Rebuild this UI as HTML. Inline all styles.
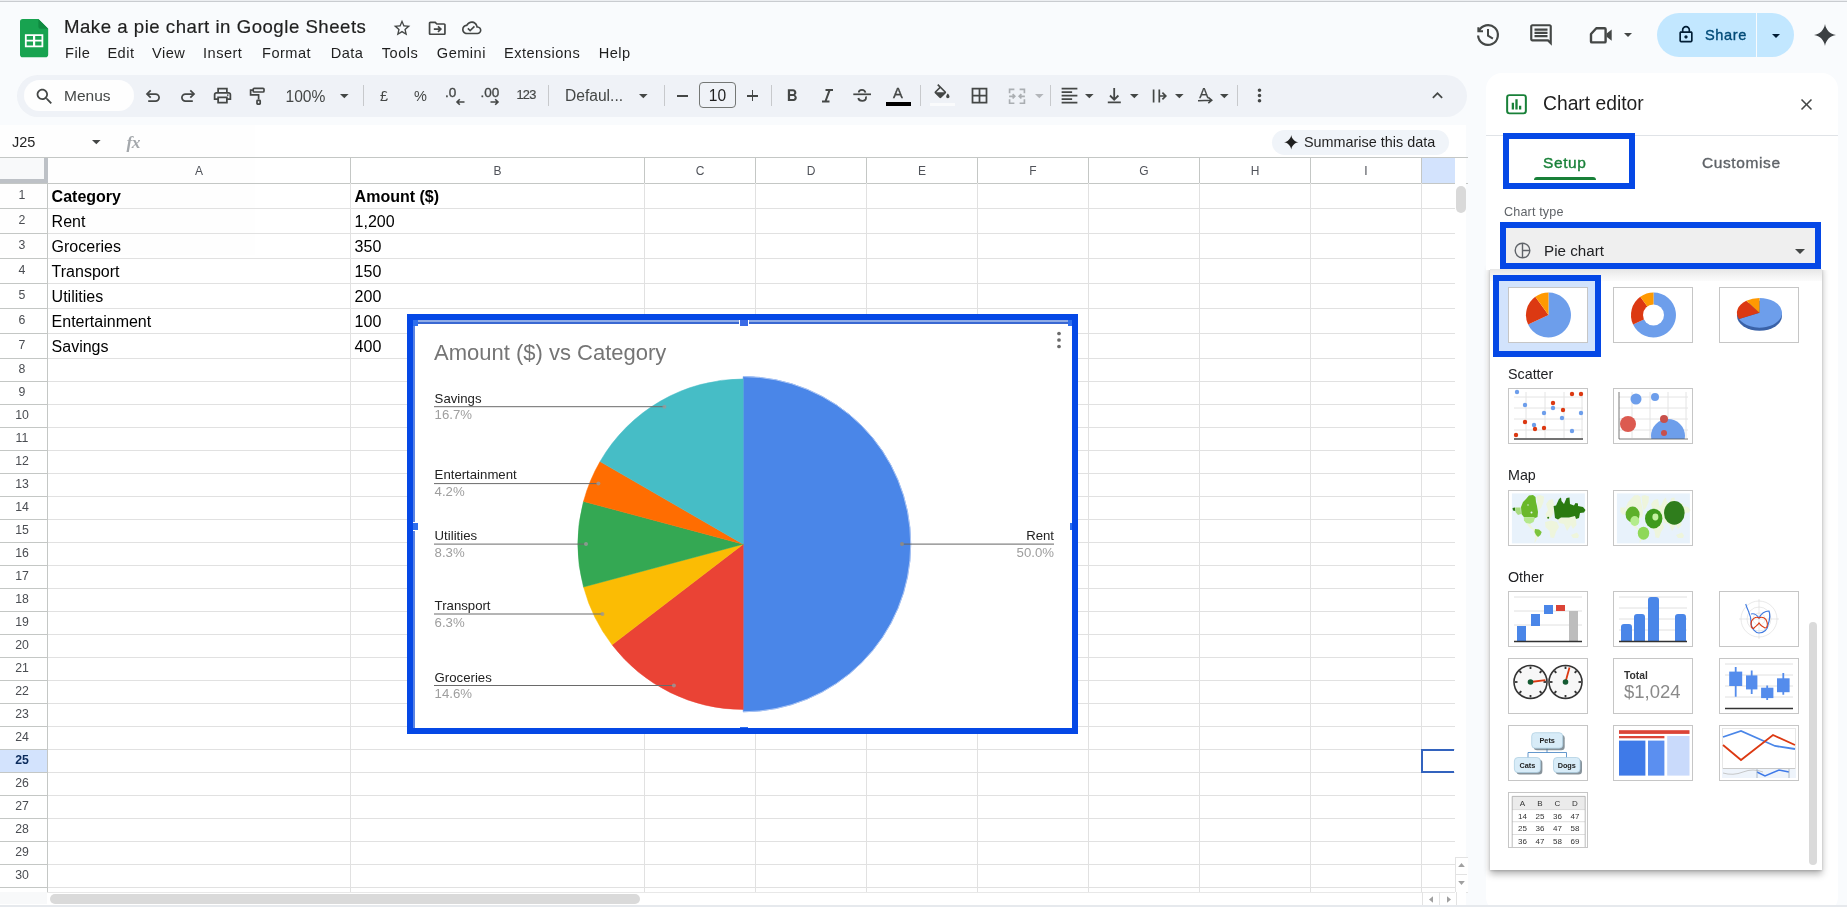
<!DOCTYPE html>
<html lang="en">
<head>
<meta charset="utf-8">
<title>Make a pie chart in Google Sheets</title>
<style>
html,body{margin:0;padding:0}
body{width:1847px;height:907px;overflow:hidden;position:relative;background:#f9fbfd;font-family:"Liberation Sans",sans-serif;color:#1f1f1f}
.a{position:absolute}
.t{position:absolute;white-space:nowrap;line-height:1}
.med{-webkit-text-stroke:0.35px currentColor}
svg{position:absolute;overflow:visible}
.menu{position:absolute;top:43.5px;font-size:14.6px;letter-spacing:.48px;line-height:18px;white-space:nowrap;color:#1f1f1f}
.sep{position:absolute;top:85px;width:1px;height:21px;background:#c7c9cc}
.ic{fill:#444746}
.hl{position:absolute;left:0;height:1px;background:#e1e1e1}
.vl{position:absolute;top:158px;width:1px;background:#e1e1e1}
.rn{position:absolute;left:0;width:44px;text-align:center;font-size:12.3px;line-height:14px;color:#4a4d52}
.cn{position:absolute;top:164px;text-align:center;font-size:12px;line-height:14px;color:#50535a}
.cell{position:absolute;font-size:16px;line-height:18px;color:#000;white-space:nowrap}
.thumb{position:absolute;width:78px;height:54px;border:1px solid #c6c6c6;background:#fff;overflow:hidden}
.thumb svg{left:0;top:0}
.lbl{position:absolute;left:1508px;font-size:14.3px;line-height:16px;color:#202124;white-space:nowrap}
</style>
</head>
<body>
<div id="root" style="position:absolute;left:0;top:0;width:1847px;height:907px;will-change:transform;opacity:.999">
<!-- top hairline -->
<div class="a" style="left:0;top:0;width:1847px;height:1px;background:#eceef1"></div><div class="a" style="left:0;top:1px;width:1847px;height:1px;background:#c9ccd0"></div>

<!-- ===== HEADER ===== -->
<svg style="left:20px;top:18.6px" width="28.2" height="38.3" viewBox="0 0 28.2 38.3">
  <path d="M2.800 0H18.400L28.200 9.800V35.500a2.800 2.800 0 0 1-2.800 2.800H2.800A2.800 2.800 0 0 1 0 35.500V2.800A2.800 2.800 0 0 1 2.800 0z" fill="#18a350"/>
  <path d="M18.400 0L28.200 9.800H21a2.600 2.600 0 0 1-2.600-2.600z" fill="#0f8a40"/>
  <path d="M4.900 15.200h18.400v13H4.900zM6.700 17v3.700h6.300V17zM15.200 17v3.700h6.300V17zM6.700 22.500v3.900h6.300v-3.900zM15.200 22.500v3.900h6.300v-3.900z" fill="#fff" fill-rule="evenodd"/>
</svg>
<div class="t" style="left:64px;top:15.5px;font-size:18.6px;letter-spacing:.52px;line-height:22px;color:#1f1f1f;-webkit-text-stroke:.2px #1f1f1f">Make a pie chart in Google Sheets</div>
<!-- star / move / cloud -->
<svg class="ic" style="left:391.6px;top:17.6px" width="20" height="20" viewBox="0 0 24 24"><path d="M22 9.24l-7.19-.62L12 2 9.19 8.63 2 9.24l5.46 4.73L5.82 21 12 17.27 18.18 21l-1.63-7.03L22 9.24zM12 15.4l-3.76 2.27 1-4.28-3.32-2.88 4.38-.38L12 6.1l1.71 4.04 4.38.38-3.32 2.88 1 4.28L12 15.4z"/></svg>
<svg class="ic" style="left:426.7px;top:18px" width="20.5" height="20.5" viewBox="0 0 24 24"><path d="M20 6h-8l-2-2H4c-1.1 0-2 .9-2 2v12c0 1.1.9 2 2 2h16c1.1 0 2-.9 2-2V8c0-1.1-.9-2-2-2zm0 12H4V6h5.17l2 2H20v10zm-7.84-2.59L13.59 17l4-4-4-4-1.42 1.41L13.75 12H8v2h5.75l-1.59 1.41z"/></svg>
<svg class="ic" style="left:462.4px;top:18.1px" width="19.5" height="19.5" viewBox="0 0 24 24"><path d="M19.35 10.04C18.67 6.59 15.64 4 12 4 9.11 4 6.6 5.64 5.35 8.04 2.34 8.36 0 10.91 0 14c0 3.31 2.69 6 6 6h13c2.76 0 5-2.24 5-5 0-2.64-2.05-4.78-4.65-4.96zM19 18H6c-2.21 0-4-1.79-4-4 0-2.05 1.53-3.76 3.56-3.97l1.07-.11.5-.95C8.08 7.14 9.94 6 12 6c2.62 0 4.88 1.86 5.39 4.43l.3 1.5 1.53.11c1.56.1 2.78 1.41 2.78 2.96 0 1.65-1.35 3-3 3zm-9-3.82l-2.09-2.09L6.5 13.5 10 17l6.01-6.01-1.41-1.41z"/></svg>
<!-- menus -->
<div class="menu" style="left:65px">File</div>
<div class="menu" style="left:107.400px">Edit</div>
<div class="menu" style="left:152px">View</div>
<div class="menu" style="left:203px">Insert</div>
<div class="menu" style="left:262px">Format</div>
<div class="menu" style="left:330.700px">Data</div>
<div class="menu" style="left:381.800px">Tools</div>
<div class="menu" style="left:436.800px">Gemini</div>
<div class="menu" style="left:504px">Extensions</div>
<div class="menu" style="left:598.700px">Help</div>

<!-- right header icons -->
<svg style="left:1475.6px;top:23.100px" width="24" height="24" viewBox="0 0 24 24" fill="none" stroke="#444746" stroke-width="2.200"><path d="M2.810 8.300A9.900 9.900 0 1 1 2.110 12.500"/><path d="M2.400 4.200V8.300H7" stroke-width="2.100"/><path d="M12 5.900V12.700L16.900 15.600" stroke-width="2"/></svg>
<svg class="ic" style="left:1528px;top:22px" width="26" height="26" viewBox="0 0 24 24"><path d="M21.990 4c0-1.100-.89-2-1.990-2H4c-1.100 0-2 .9-2 2v12c0 1.100.9 2 2 2h14l4 4-.010-18zM20 4v13.170L18.830 16H4V4h16zM6 12h12v2H6zm0-3h12v2H6zm0-3h12v2H6z"/></svg>
<svg style="left:1586px;top:22px" width="27" height="27" viewBox="0 0 27 27"><path d="M5 12L10.300 6.300H18.600a1 1 0 0 1 1 1V19.400a1 1 0 0 1-1 1H6a1 1 0 0 1-1-1Z" fill="none" stroke="#444746" stroke-width="2.400" stroke-linejoin="round"/><path d="M20.600 11.500L25.700 7.500V18.700L20.600 14.700Z" fill="#444746"/></svg>
<svg class="ic" style="left:1624px;top:33px" width="8" height="4" viewBox="0 0 10 5"><path d="M0 0l5 5 5-5z"/></svg>
<!-- share -->
<div class="a" style="left:1657px;top:13px;width:137px;height:44px;border-radius:22px;background:#c2e7ff"></div>
<div class="a" style="left:1756px;top:13px;width:1px;height:44px;background:#f9fbfd"></div>
<svg style="left:1676px;top:25.200px;fill:#001d35" width="20" height="19" viewBox="0 0 24 24" preserveAspectRatio="none"><path d="M18 8h-1V6c0-2.76-2.24-5-5-5S7 3.24 7 6v2H6c-1.1 0-2 .9-2 2v10c0 1.1.9 2 2 2h12c1.1 0 2-.9 2-2V10c0-1.1-.9-2-2-2zM9 6c0-1.66 1.34-3 3-3s3 1.34 3 3v2H9V6zm9 14H6V10h12v10zm-6-3c1.1 0 2-.9 2-2s-.9-2-2-2-2 .9-2 2 .9 2 2 2z"/></svg>
<div class="t med" style="left:1705px;top:26.400px;font-size:14.6px;letter-spacing:.6px;line-height:18px;color:#004a77">Share</div>
<svg style="left:1772.1px;top:33.700px;fill:#001d35" width="8" height="4" viewBox="0 0 10 5"><path d="M0 0l5 5 5-5z"/></svg>
<!-- gemini sparkle -->
<svg style="left:1814px;top:24px;fill:#3c4043" width="22" height="22" viewBox="0 0 24 24"><path d="M12 0C13 6.500 17.500 11 24 12C17.500 13 13 17.500 12 24C11 17.500 6.500 13 0 12C6.500 11 11 6.500 12 0z"/></svg>
<!-- ===== TOOLBAR ===== -->
<div class="a" style="left:17px;top:75px;width:1450px;height:42px;border-radius:21px;background:#eff2f7"></div>
<div class="a" style="left:24px;top:80px;width:110px;height:31px;border-radius:16px;background:#fff"></div>
<svg class="ic" style="left:33.6px;top:85.5px" width="21" height="21" viewBox="0 0 24 24"><path d="M15.5 14h-.79l-.28-.27C15.41 12.59 16 11.11 16 9.5 16 5.91 13.09 3 9.5 3S3 5.91 3 9.5 5.91 16 9.5 16c1.61 0 3.09-.59 4.23-1.57l.27.28v.79l5 4.99L20.49 19l-4.99-5zm-6 0C7.01 14 5 11.99 5 9.5S7.01 5 9.5 5 14 7.01 14 9.5 11.99 14 9.5 14z"/></svg>
<div class="t" style="left:64px;top:87px;font-size:15.5px;line-height:18px;color:#444746">Menus</div>
<!-- undo / redo -->
<svg style="left:144px;top:87px" width="18" height="18" viewBox="0 0 18 18" fill="none" stroke="#444746" stroke-width="1.750"><path d="M3.200 7H11.500a3.600 3.600 0 0 1 0 7.200H4.200"/><path d="M6.700 3.300L3 7l3.700 3.700"/></svg>
<svg style="left:179px;top:87px" width="18" height="18" viewBox="0 0 18 18" fill="none" stroke="#444746" stroke-width="1.750"><path d="M14.800 7H6.500a3.600 3.600 0 0 0 0 7.200H13.800"/><path d="M11.300 3.300L15 7l-3.700 3.700"/></svg>
<!-- print -->
<svg class="ic" style="left:212px;top:85px" width="21" height="21" viewBox="0 0 24 24"><path d="M19 8h-1V3H6v5H5c-1.66 0-3 1.34-3 3v6h4v4h12v-4h4v-6c0-1.66-1.34-3-3-3zM8 5h8v3H8V5zm8 14H8v-4h8v4zm2-4v-2H6v2H4v-4c0-.55.45-1 1-1h14c.55 0 1 .45 1 1v4h-2z"/><circle cx="18" cy="11.5" r="1"/></svg>
<!-- paint format -->
<svg style="left:247px;top:85px" width="21" height="21" viewBox="0 0 21 21" fill="none" stroke="#444746" stroke-width="1.700"><rect x="6.200" y="3.300" width="10.800" height="3.700" rx="1"/><path d="M6.200 5.100H3.600V9.800H11.600V14.600"/><rect x="10" y="15.400" width="3.200" height="3.800" rx=".6"/></svg>
<div class="t" style="left:285.5px;top:88px;font-size:15.6px;line-height:18px;color:#444746">100%</div>
<svg class="ic" style="left:339.7px;top:93.700px" width="8.6" height="4.3" viewBox="0 0 10 5"><path d="M0 0l5 5 5-5z"/></svg>
<div class="sep" style="left:363px"></div>
<div class="t" style="left:380px;top:88px;font-size:14.5px;line-height:16px;color:#444746">£</div>
<div class="t" style="left:414px;top:88px;font-size:14.5px;line-height:16px;color:#444746">%</div>
<div class="t med" style="left:445px;top:85px;font-size:13.5px;line-height:16px;color:#444746">.0</div>
<svg style="left:455.5px;top:97.600px" width="9" height="8" viewBox="0 0 9 8" fill="none" stroke="#444746" stroke-width="1.600"><path d="M1 4h7.500M3.800 1.200L1 4l2.800 2.800"/></svg>
<div class="t med" style="left:480.5px;top:85px;font-size:13.5px;line-height:16px;color:#444746">.00</div>
<svg style="left:490px;top:97.600px" width="9" height="8" viewBox="0 0 9 8" fill="none" stroke="#444746" stroke-width="1.600"><path d="M.5 4H8M5.200 1.200L8 4 5.200 6.800"/></svg>
<div class="t" style="left:516.5px;top:87.500px;font-size:12.8px;letter-spacing:-.75px;line-height:14px;color:#444746;-webkit-text-stroke:.2px #444746">123</div>
<div class="sep" style="left:548px"></div>
<div class="t" style="left:565px;top:87px;font-size:15.6px;line-height:18px;color:#444746">Defaul...</div>
<svg class="ic" style="left:638.7px;top:93.700px" width="8.6" height="4.3" viewBox="0 0 10 5"><path d="M0 0l5 5 5-5z"/></svg>
<div class="sep" style="left:664px"></div>
<div class="a" style="left:677px;top:95px;width:11px;height:1.6px;background:#444746"></div>
<div class="a" style="left:699px;top:82px;width:35px;height:24px;border:1px solid #747775;border-radius:4px;box-sizing:content-box"></div>
<div class="t" style="left:700px;width:35px;text-align:center;top:87px;font-size:15.6px;line-height:18px;color:#1f1f1f">10</div>
<div class="a" style="left:747px;top:95px;width:11px;height:1.6px;background:#444746"></div>
<div class="a" style="left:751.7px;top:90.300px;width:1.6px;height:11px;background:#444746"></div>
<div class="sep" style="left:771px"></div>
<!-- B I S A -->
<svg class="ic" style="left:782.2px;top:86.200px" width="20" height="20" viewBox="0 0 24 24"><path d="M15.600 10.790c.97-.67 1.650-1.770 1.650-2.790 0-2.260-1.750-4-4-4H7v14h7.040c2.090 0 3.710-1.700 3.710-3.790 0-1.520-.86-2.820-2.150-3.420zM9.700 6.300h3.300c.83 0 1.600.77 1.600 1.700s-.77 1.700-1.600 1.700H9.700V6.300zm3.800 9.400H9.700v-3.600h3.800c.93 0 1.700.77 1.700 1.800s-.77 1.800-1.700 1.800z"/></svg>
<svg style="left:820px;top:86px" width="16" height="20" viewBox="0 0 16 20" fill="none" stroke="#444746" stroke-width="2"><path d="M5.500 4.100H13M2 15.500H9.500M9.600 4.100L5.400 15.500"/></svg>
<svg style="left:850px;top:86px" width="24" height="20" viewBox="0 0 24 20" fill="none" stroke="#444746" stroke-width="1.800"><path d="M15.400 6.600C15 4.600 13.600 3.800 12 3.800C10.200 3.800 8.800 4.800 8.800 6.600"/><path d="M8.300 12C8.600 14 10.200 14.800 12.200 14.800C14.400 14.800 16 13.800 16 11.800C16 11.200 15.900 10.800 15.700 10.500"/><path d="M3.300 8.300H21" stroke-width="1.700"/></svg>
<div class="t" style="left:893px;top:83.400px;font-size:14.7px;line-height:20px;color:#444746;-webkit-text-stroke:.35px #444746">A</div>
<div class="a" style="left:886px;top:102px;width:25px;height:4px;background:#000"></div>
<div class="sep" style="left:920px"></div>
<!-- fill color -->
<svg class="ic" style="left:932.3px;top:83.700px" width="20" height="20" viewBox="0 0 24 24"><path d="M16.56 8.94L7.620 0 6.210 1.410l2.380 2.380-5.150 5.150c-.59.59-.59 1.540 0 2.120l5.500 5.500c.29.29.68.44 1.060.44s.77-.15 1.060-.44l5.500-5.500c.59-.58.59-1.530 0-2.120zM5.210 10L10 5.210 14.790 10H5.210zM19 11.500s-2 2.170-2 3.500c0 1.100.9 2 2 2s2-.9 2-2c0-1.330-2-3.500-2-3.500z"/></svg>
<div class="a" style="left:930px;top:102.500px;width:25px;height:3px;background:rgba(255,255,255,.65)"></div>
<!-- borders -->
<svg class="ic" style="left:969px;top:85px" width="21" height="21" viewBox="0 0 24 24"><path d="M3 3v18h18V3H3zm8 16H5v-6h6v6zm0-8H5V5h6v6zm8 8h-6v-6h6v6zm0-8h-6V5h6v6z"/></svg>
<!-- merge (disabled) -->
<svg style="left:1007.8px;top:87.500px" width="18" height="16.600" viewBox="0 0 20 19" fill="none" stroke="#aaaeb2" stroke-width="1.900"><path d="M7 1.5H1.500V6M13 1.5h5.500V6M7 17.500H1.500V13M13 17.500h5.500V13M1 9.500h6M19 9.500h-6M5 7l2.500 2.500L5 12M15 7l-2.500 2.500L15 12"/></svg>
<svg style="left:1035.4px;top:93.700px;fill:#b3b6ba" width="8.6" height="4.3" viewBox="0 0 10 5"><path d="M0 0l5 5 5-5z"/></svg>
<div class="sep" style="left:1050px"></div>
<!-- h-align -->
<svg class="ic" style="left:1059px;top:85px" width="21" height="21" viewBox="0 0 24 24"><path d="M15 15H3v2h12v-2zm0-8H3v2h12V7zM3 13h18v-2H3v2zm0 8h18v-2H3v2zM3 3v2h18V3H3z"/></svg>
<svg class="ic" style="left:1085.2px;top:93.700px" width="8.6" height="4.3" viewBox="0 0 10 5"><path d="M0 0l5 5 5-5z"/></svg>
<!-- v-align -->
<svg style="left:1104px;top:85px" width="21" height="21" viewBox="0 0 21 21" fill="none" stroke="#444746" stroke-width="1.800"><path d="M10.200 3V14.300M6 10.500L10.200 14.700 14.400 10.500M3.800 17.300H16.800"/></svg>
<svg class="ic" style="left:1130px;top:93.700px" width="8.6" height="4.3" viewBox="0 0 10 5"><path d="M0 0l5 5 5-5z"/></svg>
<!-- wrap -->
<svg style="left:1150px;top:86px" width="18" height="18" viewBox="0 0 18 18" fill="none" stroke="#444746" stroke-width="1.700"><path d="M3.600 3.500v13M9.300 3.500v13M9.300 10h6.500M12.400 6.600L15.800 10 12.400 13.400"/></svg>
<svg class="ic" style="left:1174.9px;top:93.700px" width="8.6" height="4.3" viewBox="0 0 10 5"><path d="M0 0l5 5 5-5z"/></svg>
<!-- rotate -->
<div class="t" style="left:1199.3px;top:85.400px;font-size:14px;line-height:16px;color:#444746;-webkit-text-stroke:.25px #444746">A</div>
<svg style="left:1196px;top:95px" width="18" height="10" viewBox="0 0 18 10" fill="none" stroke="#444746" stroke-width="1.500"><path d="M2 5.700L15.200 5.300M12.300 2.400L15.800 5.300 12.300 8.200"/></svg>
<svg class="ic" style="left:1220.1px;top:93.700px" width="8.6" height="4.3" viewBox="0 0 10 5"><path d="M0 0l5 5 5-5z"/></svg>
<div class="sep" style="left:1237px"></div>
<svg class="ic" style="left:1249px;top:85px" width="21" height="21" viewBox="0 0 24 24"><path d="M12 8c1.100 0 2-.9 2-2s-.9-2-2-2-2 .9-2 2 .9 2 2 2zm0 2c-1.100 0-2 .9-2 2s.9 2 2 2 2-.9 2-2-.9-2-2-2zm0 6c-1.100 0-2 .9-2 2s.9 2 2 2 2-.9 2-2-.9-2-2-2z"/></svg>
<svg class="ic" style="left:1427px;top:85px" width="21" height="21" viewBox="0 0 24 24"><path d="M12 8l-6 6 1.410 1.410L12 10.830l4.590 4.580L18 14z"/></svg>

<!-- ===== FORMULA BAR ===== -->
<div class="a" style="left:0;top:125px;width:1466px;height:782px;background:#fff"></div>
<div class="t" style="left:12px;top:134px;font-size:14.5px;line-height:16px;color:#1f1f1f">J25</div>
<svg class="ic" style="left:92px;top:139.700px" width="8.6" height="4.3" viewBox="0 0 10 5"><path d="M0 0l5 5 5-5z"/></svg>
<div class="t" style="left:126.500px;top:131.500px;font-size:17.5px;font-weight:bold;line-height:20px;color:#a4a8ac;font-family:'Liberation Serif',serif;font-style:italic;letter-spacing:-.5px">fx</div>
<div class="a" style="left:1272px;top:130px;width:177px;height:25px;border-radius:13px;background:#f0f4f9"></div>
<svg style="left:1283.6px;top:134.900px;fill:#1f1f1f" width="14.500" height="14.500" viewBox="0 0 24 24"><path d="M12 0C13 6.500 17.500 11 24 12C17.500 13 13 17.500 12 24C11 17.500 6.500 13 0 12C6.500 11 11 6.500 12 0z"/></svg>
<div class="t" style="left:1304px;top:134px;font-size:14.4px;line-height:17px;color:#1f1f1f">Summarise this data</div>
<!-- ===== GRID ===== -->
<div class="a" style="left:0;top:158px;width:1455px;height:25px;background:#fff"></div>
<div class="a" style="left:1422px;top:158px;width:33.800px;height:25px;background:#d3e3fd"></div>
<div class="a" style="left:0;top:158px;width:44px;height:21px;background:#f8f9fa;border-right:4px solid #bdc1c6;border-bottom:4px solid #bdc1c6"></div>
<div class="a" style="left:0;top:750px;width:47px;height:22px;background:#d3e3fd"></div>
<div class="hl" style="top:157px;width:1468px;background:#c4c7c5"></div>
<div class="hl" style="top:183px;width:1468px;background:#c4c7c5"></div>
<div class="hl" style="top:208px;width:1455px;background:#e1e1e1"></div>
<div class="hl" style="top:233px;width:1455px;background:#e1e1e1"></div>
<div class="hl" style="top:258px;width:1455px;background:#e1e1e1"></div>
<div class="hl" style="top:283px;width:1455px;background:#e1e1e1"></div>
<div class="hl" style="top:308px;width:1455px;background:#e1e1e1"></div>
<div class="hl" style="top:333px;width:1455px;background:#e1e1e1"></div>
<div class="hl" style="top:358px;width:1455px;background:#e1e1e1"></div>
<div class="hl" style="top:381px;width:1455px;background:#e1e1e1"></div>
<div class="hl" style="top:404px;width:1455px;background:#e1e1e1"></div>
<div class="hl" style="top:427px;width:1455px;background:#e1e1e1"></div>
<div class="hl" style="top:450px;width:1455px;background:#e1e1e1"></div>
<div class="hl" style="top:473px;width:1455px;background:#e1e1e1"></div>
<div class="hl" style="top:496px;width:1455px;background:#e1e1e1"></div>
<div class="hl" style="top:519px;width:1455px;background:#e1e1e1"></div>
<div class="hl" style="top:542px;width:1455px;background:#e1e1e1"></div>
<div class="hl" style="top:565px;width:1455px;background:#e1e1e1"></div>
<div class="hl" style="top:588px;width:1455px;background:#e1e1e1"></div>
<div class="hl" style="top:611px;width:1455px;background:#e1e1e1"></div>
<div class="hl" style="top:634px;width:1455px;background:#e1e1e1"></div>
<div class="hl" style="top:657px;width:1455px;background:#e1e1e1"></div>
<div class="hl" style="top:680px;width:1455px;background:#e1e1e1"></div>
<div class="hl" style="top:703px;width:1455px;background:#e1e1e1"></div>
<div class="hl" style="top:726px;width:1455px;background:#e1e1e1"></div>
<div class="hl" style="top:749px;width:1455px;background:#e1e1e1"></div>
<div class="hl" style="top:772px;width:1455px;background:#e1e1e1"></div>
<div class="hl" style="top:795px;width:1455px;background:#e1e1e1"></div>
<div class="hl" style="top:818px;width:1455px;background:#e1e1e1"></div>
<div class="hl" style="top:841px;width:1455px;background:#e1e1e1"></div>
<div class="hl" style="top:864px;width:1455px;background:#e1e1e1"></div>
<div class="hl" style="top:887px;width:1455px;background:#e1e1e1"></div>
<div class="vl" style="left:47px;top:183px;height:709px;background:#c4c7c5"></div>
<div class="vl" style="left:350px;top:158px;height:25px;background:#c4c7c5"></div>
<div class="vl" style="left:350px;top:183px;height:709px"></div>
<div class="vl" style="left:644px;top:158px;height:25px;background:#c4c7c5"></div>
<div class="vl" style="left:644px;top:183px;height:709px"></div>
<div class="vl" style="left:755px;top:158px;height:25px;background:#c4c7c5"></div>
<div class="vl" style="left:755px;top:183px;height:709px"></div>
<div class="vl" style="left:866px;top:158px;height:25px;background:#c4c7c5"></div>
<div class="vl" style="left:866px;top:183px;height:709px"></div>
<div class="vl" style="left:977px;top:158px;height:25px;background:#c4c7c5"></div>
<div class="vl" style="left:977px;top:183px;height:709px"></div>
<div class="vl" style="left:1088px;top:158px;height:25px;background:#c4c7c5"></div>
<div class="vl" style="left:1088px;top:183px;height:709px"></div>
<div class="vl" style="left:1199px;top:158px;height:25px;background:#c4c7c5"></div>
<div class="vl" style="left:1199px;top:183px;height:709px"></div>
<div class="vl" style="left:1310px;top:158px;height:25px;background:#c4c7c5"></div>
<div class="vl" style="left:1310px;top:183px;height:709px"></div>
<div class="vl" style="left:1421px;top:158px;height:25px;background:#c4c7c5"></div>
<div class="vl" style="left:1421px;top:183px;height:709px"></div>
<div class="hl" style="top:183px;width:47px;background:#c4c7c5"></div>
<div class="hl" style="top:208px;width:47px;background:#c4c7c5"></div>
<div class="hl" style="top:233px;width:47px;background:#c4c7c5"></div>
<div class="hl" style="top:258px;width:47px;background:#c4c7c5"></div>
<div class="hl" style="top:283px;width:47px;background:#c4c7c5"></div>
<div class="hl" style="top:308px;width:47px;background:#c4c7c5"></div>
<div class="hl" style="top:333px;width:47px;background:#c4c7c5"></div>
<div class="hl" style="top:358px;width:47px;background:#c4c7c5"></div>
<div class="hl" style="top:381px;width:47px;background:#c4c7c5"></div>
<div class="hl" style="top:404px;width:47px;background:#c4c7c5"></div>
<div class="hl" style="top:427px;width:47px;background:#c4c7c5"></div>
<div class="hl" style="top:450px;width:47px;background:#c4c7c5"></div>
<div class="hl" style="top:473px;width:47px;background:#c4c7c5"></div>
<div class="hl" style="top:496px;width:47px;background:#c4c7c5"></div>
<div class="hl" style="top:519px;width:47px;background:#c4c7c5"></div>
<div class="hl" style="top:542px;width:47px;background:#c4c7c5"></div>
<div class="hl" style="top:565px;width:47px;background:#c4c7c5"></div>
<div class="hl" style="top:588px;width:47px;background:#c4c7c5"></div>
<div class="hl" style="top:611px;width:47px;background:#c4c7c5"></div>
<div class="hl" style="top:634px;width:47px;background:#c4c7c5"></div>
<div class="hl" style="top:657px;width:47px;background:#c4c7c5"></div>
<div class="hl" style="top:680px;width:47px;background:#c4c7c5"></div>
<div class="hl" style="top:703px;width:47px;background:#c4c7c5"></div>
<div class="hl" style="top:726px;width:47px;background:#c4c7c5"></div>
<div class="hl" style="top:749px;width:47px;background:#c4c7c5"></div>
<div class="hl" style="top:772px;width:47px;background:#c4c7c5"></div>
<div class="hl" style="top:795px;width:47px;background:#c4c7c5"></div>
<div class="hl" style="top:818px;width:47px;background:#c4c7c5"></div>
<div class="hl" style="top:841px;width:47px;background:#c4c7c5"></div>
<div class="hl" style="top:864px;width:47px;background:#c4c7c5"></div>
<div class="hl" style="top:887px;width:47px;background:#c4c7c5"></div>
<div class="cn" style="left:48px;width:302px">A</div>
<div class="cn" style="left:351px;width:293px">B</div>
<div class="cn" style="left:645px;width:110px">C</div>
<div class="cn" style="left:756px;width:110px">D</div>
<div class="cn" style="left:867px;width:110px">E</div>
<div class="cn" style="left:978px;width:110px">F</div>
<div class="cn" style="left:1089px;width:110px">G</div>
<div class="cn" style="left:1200px;width:110px">H</div>
<div class="cn" style="left:1311px;width:110px">I</div>
<div class="rn" style="top:188.1px">1</div>
<div class="rn" style="top:213.1px">2</div>
<div class="rn" style="top:238.1px">3</div>
<div class="rn" style="top:263.1px">4</div>
<div class="rn" style="top:288.1px">5</div>
<div class="rn" style="top:313.1px">6</div>
<div class="rn" style="top:338.1px">7</div>
<div class="rn" style="top:362.1px">8</div>
<div class="rn" style="top:385.1px">9</div>
<div class="rn" style="top:408.1px">10</div>
<div class="rn" style="top:431.1px">11</div>
<div class="rn" style="top:454.1px">12</div>
<div class="rn" style="top:477.1px">13</div>
<div class="rn" style="top:500.1px">14</div>
<div class="rn" style="top:523.1px">15</div>
<div class="rn" style="top:546.1px">16</div>
<div class="rn" style="top:569.1px">17</div>
<div class="rn" style="top:592.1px">18</div>
<div class="rn" style="top:615.1px">19</div>
<div class="rn" style="top:638.1px">20</div>
<div class="rn" style="top:661.1px">21</div>
<div class="rn" style="top:684.1px">22</div>
<div class="rn" style="top:707.1px">23</div>
<div class="rn" style="top:730.1px">24</div>
<div class="rn" style="top:753.1px;font-weight:bold;color:#0b2b5c">25</div>
<div class="rn" style="top:776.1px">26</div>
<div class="rn" style="top:799.1px">27</div>
<div class="rn" style="top:822.1px">28</div>
<div class="rn" style="top:845.1px">29</div>
<div class="rn" style="top:868.1px">30</div>
<div class="cell" style="left:51.600px;top:188px;font-weight:bold">Category</div>
<div class="cell" style="left:354.600px;top:188px;font-weight:bold">Amount ($)</div>
<div class="cell" style="left:51.600px;top:213px">Rent</div>
<div class="cell" style="left:354.600px;top:213px">1,200</div>
<div class="cell" style="left:51.600px;top:238px">Groceries</div>
<div class="cell" style="left:354.600px;top:238px">350</div>
<div class="cell" style="left:51.600px;top:263px">Transport</div>
<div class="cell" style="left:354.600px;top:263px">150</div>
<div class="cell" style="left:51.600px;top:288px">Utilities</div>
<div class="cell" style="left:354.600px;top:288px">200</div>
<div class="cell" style="left:51.600px;top:313px">Entertainment</div>
<div class="cell" style="left:354.600px;top:313px">100</div>
<div class="cell" style="left:51.600px;top:338px">Savings</div>
<div class="cell" style="left:354.600px;top:338px">400</div>
<div class="a" style="left:1421px;top:749px;width:33.200px;height:23.800px;box-sizing:border-box;border:2.100px solid #3363be;border-right:none"></div>
<div class="a" style="left:1455px;top:158px;width:11px;height:749px;background:#fff"></div>
<div class="a" style="left:1456.2px;top:185.500px;width:9.600px;height:27px;border-radius:5px;background:#d9d9d9"></div>
<div class="a" style="left:1455px;top:857px;width:12px;height:34px;border:1px solid #e3e3e3;border-right:none;background:#fff"></div>
<div class="a" style="left:1455px;top:874px;width:12px;height:1px;background:#e3e3e3"></div>
<svg style="left:1458px;top:863px;fill:#a0a0a0" width="7" height="4" viewBox="0 0 10 6"><path d="M0 6l5-6 5 6z"/></svg>
<svg style="left:1458px;top:881px;fill:#a0a0a0" width="7" height="4" viewBox="0 0 10 6"><path d="M0 0l5 6 5-6z"/></svg>
<div class="a" style="left:0;top:892px;width:1466px;height:15px;background:#fff"></div>
<div class="a" style="left:0;top:892px;width:1455px;height:1px;background:#e8e8e8"></div>
<div class="a" style="left:0;top:892px;width:47px;height:12px;background:#f8f9fa"></div>
<div class="a" style="left:50px;top:894px;width:590px;height:10px;border-radius:5px;background:#dadada"></div>
<div class="a" style="left:1422px;top:892px;width:33px;height:13px;border-left:1px solid #e3e3e3;border-right:1px solid #e3e3e3"></div>
<div class="a" style="left:1439px;top:892px;width:1px;height:13px;background:#e3e3e3"></div>
<svg style="left:1428.5px;top:895.500px;fill:#a0a0a0" width="4" height="7" viewBox="0 0 6 10"><path d="M6 0L0 5l6 5z"/></svg>
<svg style="left:1446.5px;top:895.500px;fill:#a0a0a0" width="4" height="7" viewBox="0 0 6 10"><path d="M0 0l6 5-6 5z"/></svg>
<!-- ===== CHART ===== -->
<div class="a" style="left:413px;top:320px;width:659px;height:408px;background:#fff"></div>
<svg style="left:0;top:0" width="1100" height="760" viewBox="0 0 1100 760"><path d="M743.2 544.2L743.20 376.60A167.6 167.6 0 0 1 743.20 711.80Z" fill="#4a86e8" stroke="#4a86e8" stroke-width=".5" stroke-linejoin="round"/><path d="M743.20 376.60A167.6 167.6 0 0 1 743.20 711.80" fill="none" stroke="#a9c4f4" stroke-width="1"/><path d="M743.2 544.2L743.20 709.50A165.3 165.3 0 0 1 612.06 644.83Z" fill="#ea4335" stroke="#ea4335" stroke-width=".5" stroke-linejoin="round"/><path d="M743.2 544.2L612.06 644.83A165.3 165.3 0 0 1 583.53 586.98Z" fill="#fbbc04" stroke="#fbbc04" stroke-width=".5" stroke-linejoin="round"/><path d="M743.2 544.2L583.53 586.98A165.3 165.3 0 0 1 583.53 501.42Z" fill="#34a853" stroke="#34a853" stroke-width=".5" stroke-linejoin="round"/><path d="M743.2 544.2L583.53 501.42A165.3 165.3 0 0 1 600.05 461.55Z" fill="#ff6d01" stroke="#ff6d01" stroke-width=".5" stroke-linejoin="round"/><path d="M743.2 544.2L600.05 461.55A165.3 165.3 0 0 1 743.20 378.90Z" fill="#46bdc6" stroke="#46bdc6" stroke-width=".5" stroke-linejoin="round"/><path d="M434 406.7H664.4" stroke="#6a6a6a" stroke-width="1" fill="none"/><circle cx="664.4" cy="406.7" r="2" fill="#9a9a9a" fill-opacity=".8"/><text x="434.600" y="403.0" font-size="13.2" fill="#222">Savings</text><text x="434.600" y="419.3" font-size="13.2" fill="#9e9e9e">16.7%</text><path d="M434 483.6H598.4" stroke="#6a6a6a" stroke-width="1" fill="none"/><circle cx="598.4" cy="483.6" r="2" fill="#9a9a9a" fill-opacity=".8"/><text x="434.600" y="479.2" font-size="13.2" fill="#222">Entertainment</text><text x="434.600" y="495.7" font-size="13.2" fill="#9e9e9e">4.2%</text><path d="M434 544.1H586" stroke="#6a6a6a" stroke-width="1" fill="none"/><circle cx="586" cy="544.1" r="2" fill="#9a9a9a" fill-opacity=".8"/><text x="434.600" y="540.4" font-size="13.2" fill="#222">Utilities</text><text x="434.600" y="556.7" font-size="13.2" fill="#9e9e9e">8.3%</text><path d="M434 614H602.4" stroke="#6a6a6a" stroke-width="1" fill="none"/><circle cx="602.4" cy="614" r="2" fill="#9a9a9a" fill-opacity=".8"/><text x="434.600" y="610.3" font-size="13.2" fill="#222">Transport</text><text x="434.600" y="626.6" font-size="13.2" fill="#9e9e9e">6.3%</text><path d="M434 685.5H673.9" stroke="#6a6a6a" stroke-width="1" fill="none"/><circle cx="673.9" cy="685.5" r="2" fill="#9a9a9a" fill-opacity=".8"/><text x="434.600" y="681.8" font-size="13.2" fill="#222">Groceries</text><text x="434.600" y="698.1" font-size="13.2" fill="#9e9e9e">14.6%</text><path d="M902 544.1H1054" stroke="#636363" stroke-width="1" fill="none"/><circle cx="902" cy="544.1" r="2" fill="#8a8a8a"/><text x="1054" y="539.6" font-size="13.2" fill="#222" text-anchor="end">Rent</text><text x="1054" y="557.1" font-size="13.2" fill="#9e9e9e" text-anchor="end">50.0%</text><text x="434" y="360" font-size="22" fill="#757575">Amount ($) vs Category</text><circle cx="1059" cy="333.5" r="1.850" fill="#6b6b6b"/><circle cx="1059" cy="340" r="1.850" fill="#6b6b6b"/><circle cx="1059" cy="346.5" r="1.850" fill="#6b6b6b"/></svg>
<div class="a" style="left:413px;top:320px;width:2.200px;height:408px;background:#5a84e4"></div>
<div class="a" style="left:413px;top:319.600px;width:659px;height:2.100px;background:#8fabe6"></div>
<div class="a" style="left:413px;top:321.700px;width:659px;height:2.100px;background:#3a68d2"></div>
<div class="a" style="left:739px;top:319.600px;width:10px;height:7px;background:#fff"></div>
<div class="a" style="left:740px;top:319.600px;width:8px;height:6.400px;background:#3a6be6"></div>
<div class="a" style="left:413px;top:320px;width:5px;height:6px;background:#2f6fee"></div>
<div class="a" style="left:1067.500px;top:320px;width:5px;height:6px;background:#2f6fee"></div>
<div class="a" style="left:413px;top:522px;width:5px;height:9px;background:#fff"></div>
<div class="a" style="left:413px;top:523.100px;width:5px;height:6.700px;background:#2f6fee"></div>
<div class="a" style="left:1069.700px;top:523.100px;width:3px;height:6.700px;background:#2f6fee"></div>
<div class="a" style="left:740px;top:726.700px;width:7.500px;height:2px;background:#2f6fee"></div>
<div class="a" style="left:407px;top:314px;width:671px;height:420px;box-sizing:border-box;border:6px solid #0548e6"></div>
<!-- ===== SIDE PANEL ===== -->
<div class="a" style="left:1486px;top:73px;width:352px;height:840px;border-radius:16px;background:#fff"></div>
<svg style="left:1505.5px;top:93.500px" width="21" height="20.500" viewBox="0 0 22 22" preserveAspectRatio="none"><rect x="1.200" y="1.200" width="19.600" height="19.600" rx="2.500" fill="none" stroke="#188038" stroke-width="2.100"/><path d="M6 9.500h2.400v7H6zM9.800 5.500h2.400v11H9.800zM13.600 12.500H16v4h-2.400z" fill="#188038"/></svg>
<div class="t" style="left:1543px;top:93px;font-size:19.3px;line-height:22px;color:#1f1f1f">Chart editor</div>
<svg style="left:1797px;top:95px;fill:#444746" width="19" height="19" viewBox="0 0 24 24"><path d="M19 6.410L17.590 5 12 10.590 6.410 5 5 6.410 10.590 12 5 17.590 6.410 19 12 13.410 17.590 19 19 17.590 13.410 12z"/></svg>
<div class="a" style="left:1486px;top:135px;width:352px;height:1px;background:#e0e3e7"></div>
<!-- tabs -->
<div class="t med" style="left:1543px;top:154px;font-size:15.5px;letter-spacing:.6px;line-height:18px;color:#188038">Setup</div>
<div class="a" style="left:1534px;top:177px;width:62px;height:3px;border-radius:3px 3px 0 0;background:#188038"></div>
<div class="t med" style="left:1702px;top:154px;font-size:15.5px;letter-spacing:.6px;line-height:18px;color:#5f6368">Customise</div>
<div class="a" style="left:1503px;top:133px;width:131.500px;height:55.500px;box-sizing:border-box;border:6px solid #0548e6"></div>
<!-- chart type -->
<div class="t" style="left:1504px;top:205px;font-size:12.6px;letter-spacing:.15px;line-height:14px;color:#5f6368">Chart type</div>
<div class="a" style="left:1490px;top:264px;width:332px;height:606px;background:#fff;box-shadow:0 4px 7px rgba(0,0,0,.3),0 1px 2px rgba(0,0,0,.14)"></div>
<div class="a" style="left:1486px;top:256px;width:352px;height:14px;background:#fff"></div>
<div class="a" style="left:1500px;top:222px;width:320.500px;height:47.200px;box-sizing:border-box;border:6px solid #0548e6;background:#efefef"></div>
<svg style="left:1514px;top:242px" width="17" height="17" viewBox="0 0 17 17" fill="none" stroke="#5f6368" stroke-width="1.400"><circle cx="8.500" cy="8.500" r="7.300"/><path d="M8.500 1.200v14.600M8.500 8.500h7.300"/></svg>
<div class="t" style="left:1544px;top:242px;font-size:15.2px;line-height:18px;color:#202124">Pie chart</div>
<svg style="left:1795px;top:249px;fill:#444746" width="10" height="5" viewBox="0 0 10 5"><path d="M0 0l5 5 5-5z"/></svg>
<!-- dropdown panel -->
<div class="a" style="left:1490px;top:269px;width:332px;height:11.500px;background:linear-gradient(#e6e6e6,#f4f4f4 60%,#fbfbfb)"></div>
<!-- selected highlight -->
<div class="a" style="left:1493px;top:275px;width:108px;height:82px;box-sizing:border-box;border:6px solid #0548e6;background:#d2e3fc"></div>
<div class="lbl" style="top:366px">Scatter</div>
<div class="lbl" style="top:467px">Map</div>
<div class="lbl" style="top:569px">Other</div>
<!-- scrollbar -->
<div class="a" style="left:1809px;top:622px;width:8px;height:243px;border-radius:4px;background:#dadada"></div>
<div class="thumb" style="left:1508px;top:287px"><svg width="78" height="54" viewBox="0 0 78 54"><path d="M39.5 27L39.5 4.5A22.5 22.5 0 1 1 19.1 36.6Z" fill="#6d9eeb"/><path d="M39.5 27L19.1 36.6A22.5 22.5 0 0 1 26.3 8.8Z" fill="#dc3912"/><path d="M39.5 27L26.3 8.8A22.5 22.5 0 0 1 39.5 4.5Z" fill="#ff9900"/></svg></div>
<div class="thumb" style="left:1613px;top:287px"><svg width="78" height="54" viewBox="0 0 78 54"><path d="M39.5 27L39.5 4.5A22.5 22.5 0 1 1 19.1 36.6Z" fill="#6d9eeb"/><path d="M39.5 27L19.1 36.6A22.5 22.5 0 0 1 26.3 8.8Z" fill="#dc3912"/><path d="M39.5 27L26.3 8.8A22.5 22.5 0 0 1 39.5 4.5Z" fill="#ff9900"/><circle cx="39.5" cy="27" r="10.5" fill="#fff"/></svg></div>
<div class="thumb" style="left:1719px;top:287px"><svg width="78" height="54" viewBox="0 0 78 54"><ellipse cx="39.500" cy="27.800" rx="22.500" ry="15" fill="#3a62a8"/><path d="M39.5 24.8L39.5 10.0A22.5 14.8 0 1 1 19.1 31.1Z" fill="#6d9eeb"/><path d="M39.5 24.8L19.1 31.1A22.5 14.8 0 0 1 26.3 12.8Z" fill="#dc3912"/><path d="M39.5 24.8L26.3 12.8A22.5 14.8 0 0 1 39.5 10.0Z" fill="#ff9900"/></svg></div>
<div class="thumb" style="left:1508px;top:388px"><svg width="78" height="54" viewBox="0 0 78 54"><path d="M5 8H74" stroke="#e4e4e4"/><path d="M5 19H74" stroke="#e4e4e4"/><path d="M5 30H74" stroke="#e4e4e4"/><path d="M5 41H74" stroke="#e4e4e4"/><path d="M17 3V49" stroke="#e4e4e4"/><path d="M36 3V49" stroke="#e4e4e4"/><path d="M55 3V49" stroke="#e4e4e4"/><path d="M73 3V49" stroke="#e4e4e4"/><circle cx="16" cy="16" r="2.200" fill="#6d9eeb"/><circle cx="35" cy="24" r="2.200" fill="#6d9eeb"/><circle cx="44" cy="19" r="2.200" fill="#6d9eeb"/><circle cx="53" cy="29" r="2.200" fill="#6d9eeb"/><circle cx="72" cy="24" r="2.200" fill="#6d9eeb"/><circle cx="25" cy="36" r="2.200" fill="#6d9eeb"/><circle cx="63" cy="42" r="2.200" fill="#6d9eeb"/><circle cx="44" cy="14" r="2.200" fill="#dc3912"/><circle cx="54" cy="21" r="2.200" fill="#dc3912"/><circle cx="16" cy="33" r="2.200" fill="#dc3912"/><circle cx="26" cy="40" r="2.200" fill="#dc3912"/><circle cx="35" cy="39" r="2.200" fill="#dc3912"/><circle cx="7" cy="46" r="2.200" fill="#dc3912"/><circle cx="63" cy="5" r="2.200" fill="#dc3912"/><circle cx="72" cy="5" r="2.200" fill="#dc3912"/><circle cx="8" cy="3" r="2.200" fill="#6d9eeb"/><path d="M5 50H74" stroke="#444" stroke-width="1.300"/></svg></div>
<div class="thumb" style="left:1613px;top:388px"><svg width="78" height="54" viewBox="0 0 78 54"><path d="M5 8H74" stroke="#e4e4e4"/><path d="M5 19H74" stroke="#e4e4e4"/><path d="M5 30H74" stroke="#e4e4e4"/><path d="M5 41H74" stroke="#e4e4e4"/><path d="M18 3V49" stroke="#e4e4e4"/><path d="M36 3V49" stroke="#e4e4e4"/><path d="M54 3V49" stroke="#e4e4e4"/><path d="M72 3V49" stroke="#e4e4e4"/><circle cx="54" cy="47" r="17" fill="#6d9eeb"/><circle cx="22" cy="10" r="5.500" fill="#6d9eeb"/><circle cx="41" cy="8" r="4" fill="#6d9eeb"/><circle cx="14" cy="35" r="8" fill="#dc5a50"/><circle cx="50" cy="30" r="4" fill="#c8504b"/><circle cx="50" cy="44" r="3" fill="#c8504b"/><rect x="0" y="50" width="78" height="4" fill="#fff"/><path d="M5 3V50H74" stroke="#555" stroke-width=".8" fill="none"/></svg></div>
<div class="thumb" style="left:1508px;top:490px"><svg width="78" height="54" viewBox="0 0 78 54"><rect x="2.900" y="2.400" width="73" height="50" fill="#e8f2fb"/><path d="M27.500 5L31 4 35 5.500 34.500 11 32 17 29.500 19.500 28.500 14Z" fill="#eef5dc"/><path d="M17 32L21 32.700 23 36 25 38 23.500 38.500 20 36Z" fill="#eef5dc"/><path d="M23.500 38.500L27 37.500 25.500 41 26 46 25.500 52 27 50 29 46Z" fill="#eef5dc"/><path d="M37 13L40 9 44 8 45 14 44.600 22 42 27 38 28 36.500 23 39 19Z" fill="#eef5dc"/><path d="M36 31L42 29.500 48 31 50 36 47 41 45 47 41.500 46.500 40.500 40 36.500 36Z" fill="#eef5dc"/><path d="M49 28.400L52 26.500 60 26.500 66 25 67 28 67.500 34 64 38 62 34 58 40 55 33 50 32Z" fill="#eef5dc"/><path d="M62 44L68 41.500 70 44.500 69 47 64 47Z" fill="#eef5dc"/><path d="M12 16L14 11 17 8 20 4.500 24 4 26.500 6 27 11 28 15 29 21 28.500 26 26 27 24.500 26.200 15 26.200 12.500 23Z" fill="#6ab82a"/><circle cx="22.500" cy="21.500" r="1" fill="#e8f2fb"/><circle cx="19" cy="14" r=".7" fill="#e8f2fb"/><path d="M6.200 16.500L11.600 16.500 12 23 9 24 6.500 21Z" fill="#a8dc80"/><path d="M3.500 17L6 16.500 6.200 20 4 19.500Z" fill="#2a7a10"/><path d="M14.800 26.200H24.600L26 27 24.500 31 21 32.700 17 32 15 29.500Z" fill="#b4e88c"/><path d="M26 38L30 38.500 32.700 41 31.500 44 29 46 27 44 25.500 41Z" fill="#7cc43c"/><circle cx="39.200" cy="26.700" r="1" fill="#2a7a10"/><path d="M44.600 15L47 14.500 50 8 52 6.500 52.500 10 55 13 57.500 7 60.500 6.500 61 13 65 14.500 66.500 12 69 12.500 69 15 74 16 76.500 19 75 21.500 71 22 70 27 67 28 66 25 60 26.500 52 26.500 49 28.400 46 27Z" fill="#2a7a10"/></svg></div>
<div class="thumb" style="left:1613px;top:490px"><svg width="78" height="54" viewBox="0 0 78 54"><rect x="2.900" y="2.400" width="73" height="50" fill="#e8f2fb"/><path d="M27.500 5L31 4 35 5.500 34.500 11 32 17 29.500 19.500 28.500 14Z" fill="#eef5dc"/><path d="M17 32L21 32.700 23 36 25 38 23.500 38.500 20 36Z" fill="#eef5dc"/><path d="M23.500 38.500L27 37.500 25.500 41 26 46 25.500 52 27 50 29 46Z" fill="#eef5dc"/><path d="M37 13L40 9 44 8 45 14 44.600 22 42 27 38 28 36.500 23 39 19Z" fill="#eef5dc"/><path d="M36 31L42 29.500 48 31 50 36 47 41 45 47 41.500 46.500 40.500 40 36.500 36Z" fill="#eef5dc"/><path d="M49 28.400L52 26.500 60 26.500 66 25 67 28 67.500 34 64 38 62 34 58 40 55 33 50 32Z" fill="#eef5dc"/><path d="M62 44L68 41.500 70 44.500 69 47 64 47Z" fill="#eef5dc"/><path d="M12 16L14 11 17 8 20 4.500 24 4 26.500 6 27 11 28 15 29 21 28.500 26 26 27 24.500 26.200 15 26.200 12.500 23Z" fill="#eef5dc"/><path d="M6.200 16.500L11.600 16.500 12 23 9 24 6.500 21Z" fill="#eef5dc"/><path d="M14.800 26.200H24.600L26 27 24.500 31 21 32.700 17 32 15 29.500Z" fill="#eef5dc"/><path d="M44.600 15L47 14.500 50 8 52 6.500 52.500 10 55 13 57.500 7 60.500 6.500 61 13 65 14.500 66.500 12 69 12.500 69 15 74 16 76.500 19 75 21.500 71 22 70 27 67 28 66 25 60 26.500 52 26.500 49 28.400 46 27Z" fill="#eef5dc"/><path d="M26 38L30 38.500 32.700 41 31.500 44 29 46 27 44 25.500 41Z" fill="#eef5dc"/><ellipse cx="60.300" cy="21.900" rx="10.300" ry="11.900" fill="#2f7d1c"/><ellipse cx="39.700" cy="27.600" rx="8.700" ry="9.900" fill="#3f9a1c"/><ellipse cx="41.400" cy="26" rx="3" ry="3.400" fill="#c4f0a0"/><ellipse cx="18.600" cy="23.500" rx="7" ry="7.900" fill="#5db02a"/><ellipse cx="20.800" cy="30" rx="4.500" ry="5" fill="#b4ec8c"/><ellipse cx="29.500" cy="42.200" rx="5.700" ry="6.500" fill="#8fd858"/></svg></div>
<div class="thumb" style="left:1508px;top:591px"><svg width="78" height="54" viewBox="0 0 78 54"><path d="M5 5H73" stroke="#e0e0e0"/><path d="M5 19H73" stroke="#e0e0e0"/><path d="M5 33H73" stroke="#e0e0e0"/><rect x="8" y="34" width="9" height="15" fill="#4a86e8"/><rect x="22" y="22" width="9" height="12" fill="#4a86e8"/><rect x="35" y="13" width="9" height="9" fill="#4a86e8"/><rect x="47" y="13" width="9" height="6" fill="#db4437"/><rect x="60" y="19" width="9" height="30" fill="#bdbdbd"/><path d="M5 49.500H73" stroke="#333" stroke-width="1.300"/></svg></div>
<div class="thumb" style="left:1613px;top:591px"><svg width="78" height="54" viewBox="0 0 78 54"><path d="M5 5H73" stroke="#e0e0e0"/><path d="M5 16H73" stroke="#e0e0e0"/><path d="M5 27H73" stroke="#e0e0e0"/><path d="M5 38H73" stroke="#e0e0e0"/><path d="M7 49V35a3 3 0 0 1 3-3h5a3 3 0 0 1 3 3v14zM20 49V25a3 3 0 0 1 3-3h5a3 3 0 0 1 3 3v24zM34 49V8a3 3 0 0 1 3-3h5a3 3 0 0 1 3 3v41zM61 49V25a3 3 0 0 1 3-3h5a3 3 0 0 1 3 3v24z" fill="#4a86e8"/><path d="M5 49.500H73" stroke="#333" stroke-width="1.300"/></svg></div>
<div class="thumb" style="left:1719px;top:591px"><svg width="78" height="54" viewBox="0 0 78 54"><g fill="none" stroke="#d2d2d2" stroke-width=".5"><circle cx="39" cy="27" r="6"/><circle cx="39" cy="27" r="12"/><circle cx="39" cy="27" r="18"/><path d="M39 7v40M19 27h40"/></g><path d="M25.700 12C28 20 31 22 31 30C31 37 36 41 39 41C44 41 48 37 48 33C50 27 50 21 49 19C45 19 41 22 39 26C37 23 34 21 31 22" fill="none" stroke="#3f7ae0" stroke-width="1.100"/><path d="M39 26C36 24 31 27 31 32C31 36 33 37 34 36C36 34 38 33 39 31C40 33 43 35 45 36C47 36 48 33 47 30C46 26 42 24 39 26Z" fill="none" stroke="#dc3912" stroke-width="1.100"/></svg></div>
<div class="thumb" style="left:1508px;top:658px"><svg width="78" height="54" viewBox="0 0 78 54"><circle cx="21.5" cy="23" r="16.500" fill="#f7f7f7" stroke="#333" stroke-width="1.600"/><path d="M34.5 23.0L37.0 23.0" stroke="#333" stroke-width="1.800"/><path d="M30.7 32.2L32.5 34.0" stroke="#333" stroke-width="1.800"/><path d="M21.5 36.0L21.5 38.5" stroke="#333" stroke-width="1.800"/><path d="M12.3 32.2L10.5 34.0" stroke="#333" stroke-width="1.800"/><path d="M8.5 23.0L6.0 23.0" stroke="#333" stroke-width="1.800"/><path d="M12.3 13.8L10.5 12.0" stroke="#333" stroke-width="1.800"/><path d="M21.5 10.0L21.5 7.5" stroke="#333" stroke-width="1.800"/><path d="M30.7 13.8L32.5 12.0" stroke="#333" stroke-width="1.800"/><path d="M21.5 23L36.4 21.2" stroke="#dc3912" stroke-width="1.800"/><circle cx="21.5" cy="23" r="2.800" fill="#145a32"/><circle cx="56.5" cy="23" r="16.500" fill="#f7f7f7" stroke="#333" stroke-width="1.600"/><path d="M69.5 23.0L72.0 23.0" stroke="#333" stroke-width="1.800"/><path d="M65.7 32.2L67.5 34.0" stroke="#333" stroke-width="1.800"/><path d="M56.5 36.0L56.5 38.5" stroke="#333" stroke-width="1.800"/><path d="M47.3 32.2L45.5 34.0" stroke="#333" stroke-width="1.800"/><path d="M43.5 23.0L41.0 23.0" stroke="#333" stroke-width="1.800"/><path d="M47.3 13.8L45.5 12.0" stroke="#333" stroke-width="1.800"/><path d="M56.5 10.0L56.5 7.5" stroke="#333" stroke-width="1.800"/><path d="M65.7 13.8L67.5 12.0" stroke="#333" stroke-width="1.800"/><path d="M56.5 23L60.5 8.5" stroke="#dc3912" stroke-width="1.800"/><circle cx="56.5" cy="23" r="2.800" fill="#145a32"/></svg></div>
<div class="thumb" style="left:1613px;top:658px"><svg width="78" height="54" viewBox="0 0 78 54"><text x="10" y="19.700" font-size="10.300" font-weight="bold" fill="#333" font-family="Liberation Sans,sans-serif">Total</text><text x="10" y="39" font-size="18.500" fill="#8a8a8a" font-family="Liberation Sans,sans-serif">$1,024</text></svg></div>
<div class="thumb" style="left:1719px;top:658px"><svg width="78" height="54" viewBox="0 0 78 54"><path d="M5 5H73" stroke="#e0e0e0"/><path d="M5 16H73" stroke="#e0e0e0"/><path d="M5 27H73" stroke="#e0e0e0"/><path d="M5 38H73" stroke="#e0e0e0"/><g stroke="#548cec" stroke-width="1.800"><path d="M15.700 8v29.800M31.700 11.400v23.500M47.200 26.500v14.600M63.300 13.900v21.800"/></g><rect x="9.200" y="12.600" width="13" height="14.400" fill="#548cec"/><rect x="26" y="16.400" width="11.400" height="14" fill="#548cec"/><rect x="41.100" y="28.700" width="12.300" height="10.400" fill="#548cec"/><rect x="57" y="19.300" width="12.600" height="13.900" fill="#548cec"/><path d="M5 49.500H73" stroke="#333" stroke-width="1.300"/></svg></div>
<div class="thumb" style="left:1508px;top:725px"><svg width="78" height="54" viewBox="0 0 78 54"><path d="M38 22v4.500M19 32v-5.500H57.500v5.500" fill="none" stroke="#3d7fc0" stroke-width=".8"/><rect x="24.7" y="8.7" width="31" height="15.5" rx="3.500" fill="#5f6f79" fill-opacity=".75"/><rect x="22.7" y="6.7" width="31" height="15.5" rx="3.500" fill="#d8ecf8" stroke="#a9cbe0" stroke-width=".7"/><text x="38.2" y="17.15" font-size="7.300" font-weight="bold" text-anchor="middle" fill="#222" font-family="Liberation Sans,sans-serif">Pets</text><rect x="7.4" y="33.5" width="26" height="15" rx="3.500" fill="#5f6f79" fill-opacity=".75"/><rect x="5.4" y="31.5" width="26" height="15" rx="3.500" fill="#d8ecf8" stroke="#a9cbe0" stroke-width=".7"/><text x="18.4" y="41.7" font-size="7.300" font-weight="bold" text-anchor="middle" fill="#222" font-family="Liberation Sans,sans-serif">Cats</text><rect x="46.5" y="33.5" width="26.5" height="15" rx="3.500" fill="#5f6f79" fill-opacity=".75"/><rect x="44.5" y="31.5" width="26.5" height="15" rx="3.500" fill="#d8ecf8" stroke="#a9cbe0" stroke-width=".7"/><text x="57.75" y="41.7" font-size="7.300" font-weight="bold" text-anchor="middle" fill="#222" font-family="Liberation Sans,sans-serif">Dogs</text></svg></div>
<div class="thumb" style="left:1613px;top:725px"><svg width="78" height="54" viewBox="0 0 78 54"><rect x="5" y="4.200" width="70.500" height="3.700" fill="#db4437"/><rect x="5" y="10" width="45.400" height="2.300" fill="#db4437"/><rect x="5" y="14.600" width="26.400" height="35" fill="#3f7ae8"/><rect x="34" y="14.600" width="16.400" height="35" fill="#5b8ff0"/><rect x="53.200" y="10" width="22.300" height="39.600" fill="#c9dafb"/></svg></div>
<div class="thumb" style="left:1719px;top:725px"><svg width="78" height="54" viewBox="0 0 78 54"><rect x="2.500" y="2.500" width="73" height="49" fill="none" stroke="#e2e2e2" stroke-width=".8"/><rect x="2" y="43" width="74" height="9" fill="#eef4fb"/><path d="M3 11L21 5 55 20 75 23" fill="none" stroke="#4a86e8" stroke-width="1.800"/><path d="M3 19L21 34 53 9 75 19" fill="none" stroke="#dc3912" stroke-width="1.800"/><path d="M3 42.500H75M3 47q10 3 20-1t20 0" fill="none" stroke="#bbb" stroke-width=".8"/><path d="M37 46l8 4 14-6 10 2" fill="none" stroke="#3f7ae8" stroke-width="1.500"/><path d="M37 43v9M69 43v9" stroke="#9ab" stroke-width=".8"/></svg></div>
<div class="thumb" style="left:1508px;top:792px"><svg width="78" height="54" viewBox="0 0 78 54"><rect x="3" y="3.400" width="73" height="13.200" fill="#ebebeb"/><text x="13.4" y="12.9" font-size="8" text-anchor="middle" fill="#333" font-family="Liberation Sans,sans-serif">A</text><text x="30.9" y="12.9" font-size="8" text-anchor="middle" fill="#333" font-family="Liberation Sans,sans-serif">B</text><text x="48.4" y="12.9" font-size="8" text-anchor="middle" fill="#333" font-family="Liberation Sans,sans-serif">C</text><text x="65.9" y="12.9" font-size="8" text-anchor="middle" fill="#333" font-family="Liberation Sans,sans-serif">D</text><text x="13.4" y="25.5" font-size="8" text-anchor="middle" fill="#333" font-family="Liberation Sans,sans-serif">14</text><text x="30.9" y="25.5" font-size="8" text-anchor="middle" fill="#333" font-family="Liberation Sans,sans-serif">25</text><text x="48.4" y="25.5" font-size="8" text-anchor="middle" fill="#333" font-family="Liberation Sans,sans-serif">36</text><text x="65.9" y="25.5" font-size="8" text-anchor="middle" fill="#333" font-family="Liberation Sans,sans-serif">47</text><text x="13.4" y="38.1" font-size="8" text-anchor="middle" fill="#333" font-family="Liberation Sans,sans-serif">25</text><text x="30.9" y="38.1" font-size="8" text-anchor="middle" fill="#333" font-family="Liberation Sans,sans-serif">36</text><text x="48.4" y="38.1" font-size="8" text-anchor="middle" fill="#333" font-family="Liberation Sans,sans-serif">47</text><text x="65.9" y="38.1" font-size="8" text-anchor="middle" fill="#333" font-family="Liberation Sans,sans-serif">58</text><text x="13.4" y="50.7" font-size="8" text-anchor="middle" fill="#333" font-family="Liberation Sans,sans-serif">36</text><text x="30.9" y="50.7" font-size="8" text-anchor="middle" fill="#333" font-family="Liberation Sans,sans-serif">47</text><text x="48.4" y="50.7" font-size="8" text-anchor="middle" fill="#333" font-family="Liberation Sans,sans-serif">58</text><text x="65.9" y="50.7" font-size="8" text-anchor="middle" fill="#333" font-family="Liberation Sans,sans-serif">69</text><path d="M3 16.6H76" stroke="#d0d0d0" stroke-width=".7"/><path d="M3 28.7H76" stroke="#d0d0d0" stroke-width=".7"/><path d="M3 41.5H76" stroke="#d0d0d0" stroke-width=".7"/><path d="M3.200 54V3.400H76.200V54" fill="none" stroke="#aaa" stroke-width=".8"/></svg></div>
<div class="a" style="left:0;top:905px;width:1847px;height:2px;background:#e6e9ed"></div>
</div>
</body>
</html>
